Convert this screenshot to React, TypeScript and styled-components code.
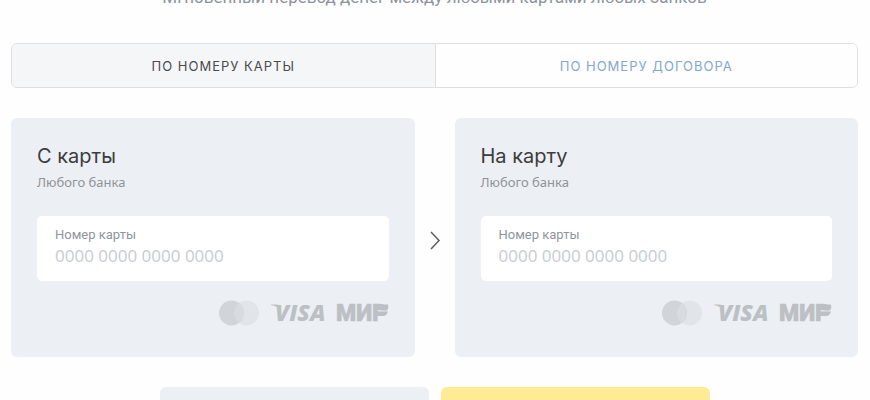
import React, { useId, useState } from "react";
import styled, { createGlobalStyle } from "styled-components";

const GlobalStyle = createGlobalStyle`
  * { box-sizing: border-box; }
  body {
    margin: 0;
    background: #fefefe;
    font-family: Roboto, "Liberation Sans", sans-serif;
    color: #333;
  }
`;

const Page = styled.main`
  height: 100vh;
  overflow: hidden;
  padding: 0 12px 0 11px;
`;

const LeadClip = styled.header`
  display: flex;
  justify-content: center;
  align-items: flex-end;
  height: 8px;
  overflow: hidden;
`;

const Lead = styled.p`
  flex: none;
  margin: 0;
  font-size: 17px;
  line-height: 22px;
  color: #8d939b;
  white-space: nowrap;
`;

const Tabs = styled.div`
  display: grid;
  grid-template-columns: 1fr 1fr;
  margin-top: 35px;
  border: 1px solid #dddfe0;
  border-radius: 6px;
  overflow: hidden;
`;

const Tab = styled.button<{ $active: boolean }>`
  height: 43px;
  padding: 0;
  border: 0;
  background: ${(p) => (p.$active ? "#f5f6f8" : "#fefefe")};
  color: ${(p) => (p.$active ? "#4b4b4d" : "#83a8d0")};
  font: 400 13px/20px Inter, sans-serif;
  letter-spacing: 1px;
  text-transform: uppercase;
  cursor: pointer;

  & + & {
    border-left: 1px solid #dddfe0;
  }
`;

const Transfer = styled.form`
  display: grid;
  grid-template-columns: 1fr 40px 1fr;
  align-items: center;
  margin-top: 30px;
`;

const Card = styled.section`
  padding: 26px 26px 31px;
  border-radius: 6px;
  background: #ecf0f5;
`;

const CardTitle = styled.h2`
  margin: 0;
  font: 400 20px/24px Inter, sans-serif;
  color: #3c3c3e;
`;

const CardNote = styled.p`
  margin: 6px 0 0;
  font: 400 13px/16px "Noto Sans", sans-serif;
  color: #909396;
`;

const Field = styled.div`
  display: flex;
  flex-direction: column;
  gap: 1px;
  margin-top: 26px;
  padding: 11px 18px 13px;
  border-radius: 5px;
  background: #fff;
`;

const FieldLabel = styled.label`
  font: 400 13px/16px Roboto, sans-serif;
  color: #8f959e;
`;

const FieldInput = styled.input`
  width: 100%;
  height: 24px;
  padding: 0;
  border: 0;
  outline: 0;
  background: transparent;
  font: 400 17px/24px "Open Sans", sans-serif;
  color: #333;

  &::placeholder {
    color: #c8cbcf;
    opacity: 1;
  }
`;

const Brands = styled.div`
  display: flex;
  justify-content: flex-end;
  margin-top: 19px;
`;

const BrandsArt = styled.svg`
  display: block;
`;

const Arrow = styled.div`
  display: flex;
  justify-content: center;
  padding-top: 4px;
`;

const Actions = styled.div`
  display: grid;
  grid-template-columns: 269px 269px;
  justify-content: center;
  gap: 12px;
  margin-top: 30px;
`;

const Action = styled.div<{ $accent?: boolean }>`
  height: 56px;
  border-radius: 6px;
  background: ${(p) => (p.$accent ? "#ffeb94" : "#ecf0f5")};
`;

function PaymentBrands() {
  return (
    <BrandsArt width="170" height="26" viewBox="0 0 170 26" role="img" aria-label="Mastercard, VISA, МИР">
      <circle cx="27.5" cy="13" r="12.5" fill="#e1e4e8" />
      <circle cx="12.5" cy="13" r="12.5" fill="#d1d4d8" />
      <path d="M20 3a12.500 12.500 0 0 1 0 20a12.500 12.500 0 0 1 0-20z" fill="#d8dbdf" />
      <g fill="#bcc0c4" fontFamily="Roboto, sans-serif" fontWeight="900">
        <path d="M52 4.500h6q2.500 0 3 2.500l1 5c-2-4-5-6-10-7z" />
        <text x="56" y="21" fontFamily="Open Sans, sans-serif" fontWeight="800" fontSize="23" fontStyle="italic">VISA</text>
        <text x="117" y="21" fontSize="23" stroke="#bcc0c4" strokeWidth="0.600">МИР</text>
        <path d="M155 4.500h14q1 3-1 6h-8q-4-1-5-6z" />
        <path d="M156 11h13q-1 5-5 5h-8z" />
      </g>
      <path d="M159 11h11" stroke="#ecf0f5" strokeWidth="0.800" />
    </BrandsArt>
  );
}

function TransferCard({ title }: { title: string }) {
  const id = useId();
  return (
    <Card>
      <CardTitle>{title}</CardTitle>
      <CardNote>Любого банка</CardNote>
      <Field>
        <FieldLabel htmlFor={id}>Номер карты</FieldLabel>
        <FieldInput id={id} inputMode="numeric" placeholder="0000 0000 0000 0000" />
      </Field>
      <Brands>
        <PaymentBrands />
      </Brands>
    </Card>
  );
}

const modes = ["По номеру карты", "По номеру договора"];

export default function App() {
  const [mode, setMode] = useState(0);
  return (
    <>
      <GlobalStyle />
      <Page>
        <LeadClip>
          <Lead>Мгновенный перевод денег между любыми картами любых банков</Lead>
        </LeadClip>
        <Tabs role="tablist">
          {modes.map((label, i) => (
            <Tab key={label} type="button" role="tab" aria-selected={mode === i} $active={mode === i} onClick={() => setMode(i)}>
              {label}
            </Tab>
          ))}
        </Tabs>
        <Transfer>
          <TransferCard title="С карты" />
          <Arrow>
            <svg width="12" height="20" viewBox="0 0 12 20" fill="none" stroke="#5c5d5f" strokeWidth="1.500" aria-hidden="true">
              <path d="M2 2l8 8.500-8 8.500" />
            </svg>
          </Arrow>
          <TransferCard title="На карту" />
        </Transfer>
        <Actions>
          <Action />
          <Action $accent />
        </Actions>
      </Page>
    </>
  );
}
